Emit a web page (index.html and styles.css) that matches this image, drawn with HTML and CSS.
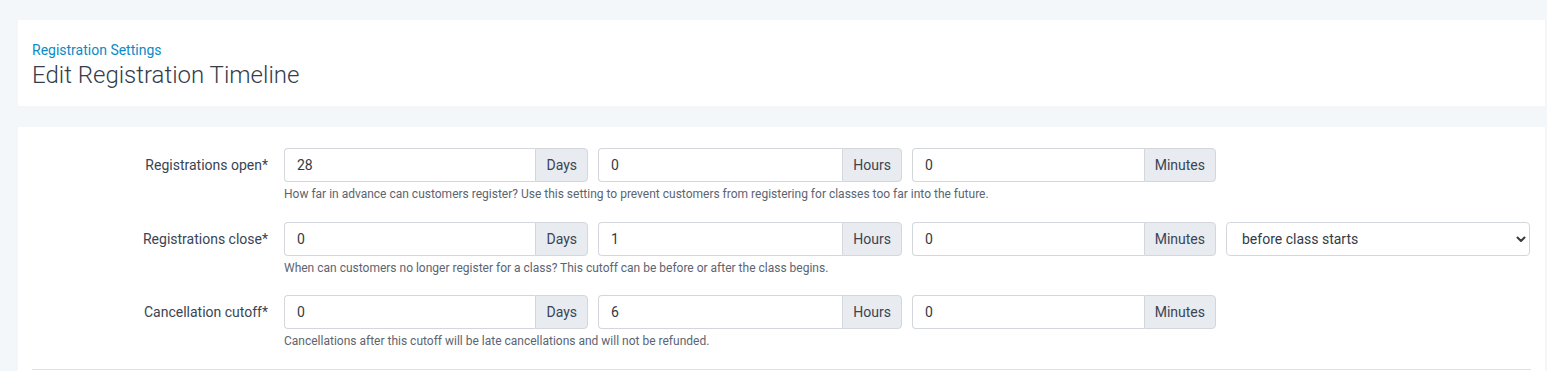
FILE: index.html
```html
<!DOCTYPE html>
<html lang="en">
<head>
    <meta charset="UTF-8">
    <meta name="viewport" content="width=device-width, initial-scale=1.0">
    <title>Edit Registration Timeline</title>
    <link rel="stylesheet" href="styles.css">
</head>
<body>
    <div class="page-header card">
        <a href="#" class="crumb">Registration Settings</a>
        <h1 class="page-title">Edit Registration Timeline</h1>
    </div>

    <div class="card form-card">
        <div class="form-row">
            <label class="form-label">Registrations open*</label>
            <div class="form-field">
                <div class="inputs">
                    <div class="input-group">
                        <input type="text" value="28">
                        <span class="addon">Days</span>
                    </div>
                    <div class="input-group">
                        <input type="text" value="0">
                        <span class="addon">Hours</span>
                    </div>
                    <div class="input-group">
                        <input type="text" value="0">
                        <span class="addon">Minutes</span>
                    </div>
                </div>
                <p class="help">How far in advance can customers register? Use this setting to prevent customers from registering for classes too far into the future.</p>
            </div>
        </div>

        <div class="form-row">
            <label class="form-label">Registrations close*</label>
            <div class="form-field">
                <div class="inputs">
                    <div class="input-group">
                        <input type="text" value="0">
                        <span class="addon">Days</span>
                    </div>
                    <div class="input-group">
                        <input type="text" value="1">
                        <span class="addon">Hours</span>
                    </div>
                    <div class="input-group">
                        <input type="text" value="0">
                        <span class="addon">Minutes</span>
                    </div>
                    <div class="select-wrap">
                        <select>
                            <option>before class starts</option>
                            <option>after class starts</option>
                        </select>
                        <svg class="chevron" width="10" height="7" viewBox="0 0 10 7">
                            <path d="M1.5 1.5 L5 5 L8.5 1.5" fill="none" stroke="#343a40" stroke-width="2" stroke-linecap="round" stroke-linejoin="round"/>
                        </svg>
                    </div>
                </div>
                <p class="help">When can customers no longer register for a class? This cutoff can be before or after the class begins.</p>
            </div>
        </div>

        <div class="form-row">
            <label class="form-label">Cancellation cutoff*</label>
            <div class="form-field">
                <div class="inputs">
                    <div class="input-group">
                        <input type="text" value="0">
                        <span class="addon">Days</span>
                    </div>
                    <div class="input-group">
                        <input type="text" value="6">
                        <span class="addon">Hours</span>
                    </div>
                    <div class="input-group">
                        <input type="text" value="0">
                        <span class="addon">Minutes</span>
                    </div>
                </div>
                <p class="help">Cancellations after this cutoff will be late cancellations and will not be refunded.</p>
            </div>
        </div>

        <hr class="divider">
    </div>
</body>
</html>
```

FILE: styles.css
```css
* {
    margin: 0;
    padding: 0;
    box-sizing: border-box;
}
body {
    background-color: #f4f7fa;
    font-family: Roboto, "Liberation Sans", sans-serif;
    color: #3a4453;
    padding: 20px 2px 0 18px;
}
.card {
    background-color: #fff;
}

/* header */
.page-header {
    padding: 21px 14px 17px;
    margin-bottom: 21px;
}
.crumb {
    display: block;
    font-size: 14px;
    line-height: 18px;
    color: #0b8ac6;
    text-decoration: none;
    margin-bottom: 2px;
}
.page-title {
    font-size: 24px;
    line-height: 28px;
    font-weight: 300;
    color: #333d4c;
}

/* form */
.form-card {
    padding: 21px 14px 20px;
}
.form-row {
    display: flex;
    gap: 16px;
    margin-bottom: 20px;
}
.form-row + .form-row + .form-row {
    margin-top: -1px;
}
.form-label {
    width: 236px;
    height: 34px;
    flex-shrink: 0;
    display: flex;
    align-items: center;
    justify-content: flex-end;
    font-size: 14px;
    color: #3a4453;
}
.inputs {
    display: flex;
    gap: 10px;
}
.input-group {
    width: 304px;
    height: 34px;
    display: flex;
}
.input-group input {
    flex: 1;
    min-width: 0;
    border: 1px solid #d3d7dc;
    border-right: 0;
    border-radius: 4px 0 0 4px;
    padding: 0 12px;
    font-family: inherit;
    font-size: 14px;
    color: #333a44;
    outline: none;
}
.addon {
    display: flex;
    align-items: center;
    padding: 0 10px;
    background-color: #e8ebef;
    border: 1px solid #d3d7dc;
    border-radius: 0 4px 4px 0;
    font-size: 14px;
    color: #3a4453;
}
.select-wrap {
    position: relative;
    width: 304px;
    height: 34px;
}
.select-wrap select {
    appearance: none;
    width: 100%;
    height: 100%;
    border: 1px solid #d3d7dc;
    border-radius: 4px;
    background-color: #fff;
    padding: 0 15px;
    font-family: inherit;
    font-size: 14px;
    color: #333a44;
    outline: none;
}
.chevron {
    position: absolute;
    right: 4px;
    top: 14px;
    pointer-events: none;
}
.help {
    margin-top: 4px;
    font-size: 12px;
    line-height: 16px;
    color: #5c6470;
}
.divider {
    border: 0;
    border-top: 1px solid #dde1e5;
    margin-top: 19px;
}
```
